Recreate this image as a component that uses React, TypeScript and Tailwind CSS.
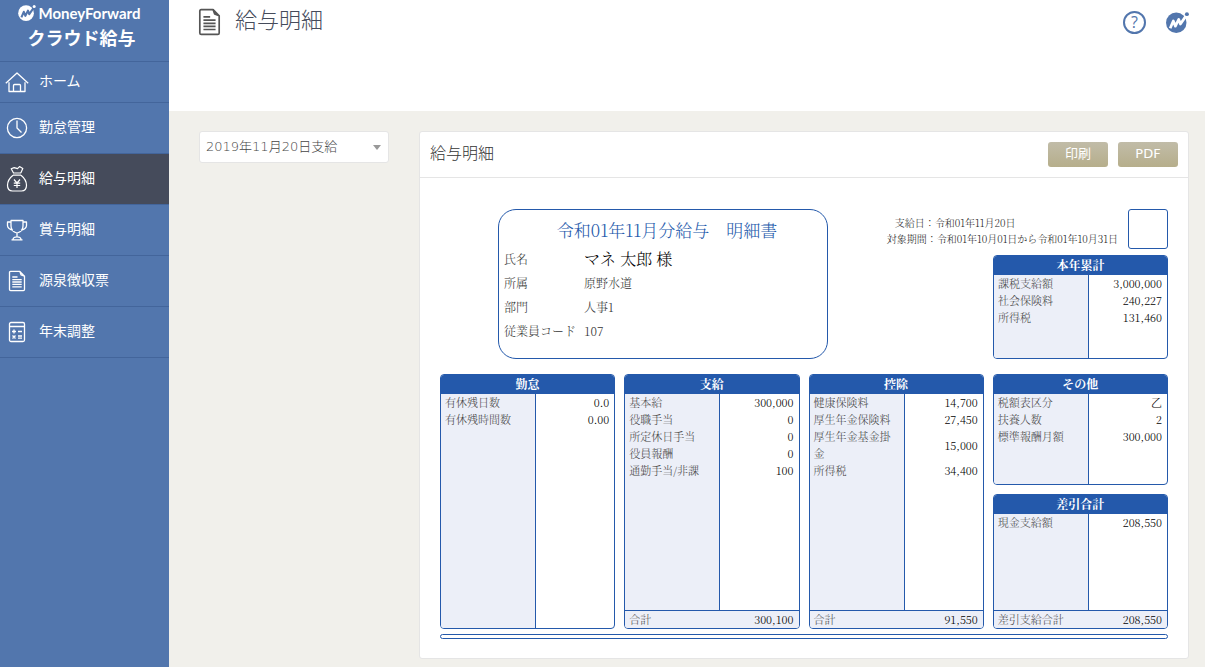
import type { ReactNode } from "react";
import clsx from "clsx";

type Row = { label: string; value: string };

const attendance: Row[] = [
  { label: "有休残日数", value: "0.0" },
  { label: "有休残時間数", value: "0.00" },
];

const payments: Row[] = [
  { label: "基本給", value: "300,000" },
  { label: "役職手当", value: "0" },
  { label: "所定休日手当", value: "0" },
  { label: "役員報酬", value: "0" },
  { label: "通勤手当/非課", value: "100" },
];

const deductions: Row[] = [
  { label: "健康保険料", value: "14,700" },
  { label: "厚生年金保険料", value: "27,450" },
  { label: "厚生年金基金掛金", value: "15,000" },
  { label: "所得税", value: "34,400" },
];

const others: Row[] = [
  { label: "税額表区分", value: "乙" },
  { label: "扶養人数", value: "2" },
  { label: "標準報酬月額", value: "300,000" },
];

const yearToDate: Row[] = [
  { label: "課税支給額", value: "3,000,000" },
  { label: "社会保険料", value: "240,227" },
  { label: "所得税", value: "131,460" },
];

function Icon({ children, className }: { children: ReactNode; className?: string }) {
  return (
    <svg
      viewBox="0 0 24 24"
      fill="none"
      stroke="currentColor"
      strokeWidth="1.3"
      strokeLinejoin="round"
      aria-hidden="true"
      className={clsx("shrink-0", className)}
    >
      {children}
    </svg>
  );
}

function HomeIcon() {
  return (
    <Icon className="size-6">
      <path d="M4 12.2V21.5H20V12.2M0.8 13.2L12 3L23.2 13.2M8.5 21.5V15.5Q8.5 14.5 9.5 14.5H14.5Q15.5 14.5 15.5 15.5V21.5" />
    </Icon>
  );
}

function ClockIcon() {
  return (
    <Icon className="size-6">
      <circle cx="12" cy="12" r="9.6" />
      <path d="M12 4.5V12L16.5 16.5" />
    </Icon>
  );
}

function MoneyBagIcon() {
  return (
    <svg
      viewBox="0 0 24 28"
      fill="none"
      stroke="currentColor"
      strokeWidth="1.2"
      strokeLinejoin="round"
      aria-hidden="true"
      className="h-7 w-6 shrink-0"
    >
      <path d="M8.5 8L6.2 3.8L9.2 2.6L12.5 3.6L14.5 1.6L17.8 3.6L15.8 8" />
      <path d="M8 8H16M8 10.2H16M8 10.2C4.5 13 2.5 16.5 2.5 20.3C2.5 24 4.5 26 7.5 26H16.5C19.5 26 21.5 24 21.5 20.3C21.5 16.5 19.5 13 16 10.2" />
      <path d="M9 14.5L12 18L15 14.5M12 18V23M8.8 18.2H15.2M8.8 20.5H15.2" />
    </svg>
  );
}

function TrophyIcon() {
  return (
    <Icon className="size-6">
      <path d="M6 2.5H18V8C18 11.5 15.5 14 12 15C8.5 14 6 11.5 6 8ZM6 4H2.5V7.5C2.5 10 5 11.5 8 12.3M18 4H21.5V7.5C21.5 10 19 11.5 16 12.3M12 15V18.5M8 21.8Q8 18.8 12 18.8Q16 18.8 16 21.8M6.5 21.8H17.5" />
    </Icon>
  );
}

function DocumentIcon({ className }: { className?: string }) {
  return (
    <Icon className={className}>
      <path d="M5.5 2.4H14.8L16 5.8L19.5 7.2V20.5Q19.5 21.6 18.4 21.6H5.6Q4.5 21.6 4.5 20.5V3.5Q4.5 2.4 5.5 2.4ZM14.8 2.4L19.5 7.2" />
      <path d="M7.3 8H12.5M7.3 10.6H16.7M7.3 13H16.7M7.3 15.4H16.7M7.3 17.8H16.7" />
    </Icon>
  );
}

function CalculatorIcon() {
  return (
    <Icon className="size-6">
      <rect x="4.5" y="2.5" width="15" height="19" rx="1.5" />
      <path d="M4.5 6.5H19.5M7 11.5H11M9 9.5V13.5M13 11.5H17M7.5 15.5L10.5 18.5M10.5 15.5L7.5 18.5M13 16H17M13 18.2H17" />
    </Icon>
  );
}

function BrandMark({ className, lineColor }: { className?: string; lineColor: string }) {
  return (
    <svg viewBox="0 0 22 20" fill="currentColor" aria-hidden="true" className={className}>
      <circle cx="9.8" cy="10.2" r="9.8" />
      <path
        d="M4 15.5L7 8.5L9 13.5L12.2 7L13.8 11.5L19.5 3.2"
        fill="none"
        stroke={lineColor}
        strokeWidth="2.6"
        strokeLinejoin="round"
      />
      <circle cx="20" cy="2" r="1.9" />
    </svg>
  );
}

const navItems = [
  { label: "ホーム", icon: <HomeIcon />, short: true },
  { label: "勤怠管理", icon: <ClockIcon /> },
  { label: "給与明細", icon: <MoneyBagIcon />, active: true },
  { label: "賞与明細", icon: <TrophyIcon /> },
  { label: "源泉徴収票", icon: <DocumentIcon className="size-6" /> },
  { label: "年末調整", icon: <CalculatorIcon /> },
];

function Sidebar() {
  return (
    <aside className="w-[169px] shrink-0 bg-[#5276ad] text-white">
      <div className="flex h-[62px] flex-col items-center border-b border-[#43659b] pt-1 pr-2.5">
        <div className="flex items-center gap-0.5">
          <BrandMark className="h-4 w-[18px]" lineColor="#5276ad" />
          <span className="font-[Lato,sans-serif] text-[15px] leading-[18px] font-bold">MoneyForward</span>
        </div>
        <span className="pl-1 text-lg leading-[34px] font-bold">クラウド給与</span>
      </div>
      <nav>
        {navItems.map((item) => (
          <a
            key={item.label}
            href="#"
            className={clsx(
              "flex items-center gap-2.5 border-b border-[#43659b] pl-[5px] text-sm",
              item.short ? "h-[41px]" : "h-[51px]",
              item.active && "bg-[#454b5b]"
            )}
          >
            {item.icon}
            <span className="pb-0.5">{item.label}</span>
          </a>
        ))}
      </nav>
    </aside>
  );
}

type SlipTableProps = {
  title: string;
  rows: Row[];
  total?: Row;
  className?: string;
};

function SlipTable({ title, rows, total, className }: SlipTableProps) {
  return (
    <section
      className={clsx("flex flex-col overflow-hidden rounded border border-[#2459ab] bg-white", className)}
    >
      <h3 className="bg-[#2459ab] pb-0.5 text-center text-xs leading-[17px] font-bold text-white">{title}</h3>
      <div className="grid flex-1">
        <table
          aria-label={title}
          className="h-full w-full table-fixed border-separate border-spacing-0 text-[11px] leading-[17px] font-light"
        >
          <colgroup>
            <col className="w-[95px]" />
            <col />
          </colgroup>
          <tbody>
            {rows.map((row) => (
              <tr key={row.label} className="h-[17px]">
                <th
                  scope="row"
                  className="border-r border-[#2459ab] bg-[#eceff8] px-1 text-left font-light text-[#444]"
                >
                  {row.label}
                </th>
                <td className="px-[5px] text-right text-black">{row.value}</td>
              </tr>
            ))}
            <tr>
              <td className="border-r border-[#2459ab] bg-[#eceff8]" />
              <td />
            </tr>
          </tbody>
          {total && (
            <tfoot>
              <tr className="h-[18px] bg-[#eceff8]">
                <th scope="row" className="border-t border-[#2459ab] px-1 text-left font-light text-[#444]">
                  {total.label}
                </th>
                <td className="border-t border-[#2459ab] px-[5px] text-right text-black">{total.value}</td>
              </tr>
            </tfoot>
          )}
        </table>
      </div>
    </section>
  );
}

function EmployeeCard() {
  return (
    <div className="ml-[58px] min-h-[150px] w-[330px] rounded-[18px] border border-[#2459ab] px-[5px] pt-[3px]">
      <h3 className="pl-2 text-center text-[17px] leading-[34px] font-light text-[#2459ab]">
        令和01年11月分給与　明細書
      </h3>
      <dl className="grid grid-cols-[80px_1fr] text-xs leading-6 font-light text-[#333]">
        <dt>氏名</dt>
        <dd className="text-base leading-6 text-black">マネ 太郎 様</dd>
        <dt>所属</dt>
        <dd>原野水道</dd>
        <dt>部門</dt>
        <dd>人事1</dd>
        <dt>従業員コード</dt>
        <dd>107</dd>
      </dl>
    </div>
  );
}

function Payslip() {
  return (
    <div className="px-5 pt-[31px] pb-[19px] font-['Noto_Serif_CJK_JP','Noto_Sans_CJK_JP',serif]">
      <div className="flex justify-between">
        <EmployeeCard />
        <div className="flex flex-col items-end gap-1.5">
          <div className="flex gap-2.5">
            <div className="pt-1.5 text-[10px] leading-4 font-light text-[#222]">
              <p className="pl-2">支給日：令和01年11月20日</p>
              <p>対象期間：令和01年10月01日から令和01年10月31日</p>
            </div>
            <div className="size-10 rounded-[3px] border border-[#2459ab]" />
          </div>
          <SlipTable title="本年累計" rows={yearToDate} className="w-[175px] flex-1" />
        </div>
      </div>
      <div className="mt-[15px] grid min-h-[255px] grid-cols-4 gap-[9px]">
        <SlipTable title="勤怠" rows={attendance} />
        <SlipTable title="支給" rows={payments} total={{ label: "合計", value: "300,100" }} />
        <SlipTable title="控除" rows={deductions} total={{ label: "合計", value: "91,550" }} />
        <div className="flex flex-col gap-[9px]">
          <SlipTable title="その他" rows={others} className="min-h-[111px]" />
          <SlipTable
            title="差引合計"
            rows={[{ label: "現金支給額", value: "208,550" }]}
            total={{ label: "差引支給合計", value: "208,550" }}
            className="flex-1"
          />
        </div>
      </div>
      <div className="mt-[5px] h-[5px] rounded-sm border border-[#2459ab]" />
    </div>
  );
}

function ActionButton({ children }: { children: ReactNode }) {
  return (
    <button
      type="button"
      className="h-[25px] w-[60px] rounded-[3px] bg-linear-to-b from-[#c1bca8] to-[#b6ae8b] pb-0.5 text-[13px] text-white"
    >
      {children}
    </button>
  );
}

export default function App() {
  return (
    <div className="flex min-h-screen bg-[#f1f0eb] font-['DejaVu_Sans','Noto_Sans_CJK_JP',sans-serif]">
      <Sidebar />
      <div className="min-w-0 flex-1">
        <header className="flex h-[111px] justify-between bg-white pr-4 pl-[25px]">
          <div className="flex h-11 items-center gap-2.5 text-[#454b5b]">
            <DocumentIcon className="h-8 w-[31px] text-[#555]" />
            <h1 className="pb-1 text-[22px] font-light">給与明細</h1>
          </div>
          <div className="flex h-11 items-center gap-5 text-[#5276ad]">
            <button
              type="button"
              aria-label="ヘルプ"
              className="size-[23px] rounded-full border-2 border-[#5276ad] font-['Open_Sans',sans-serif] text-base leading-[18px] font-medium"
            >
              ?
            </button>
            <a href="#" aria-label="マネーフォワード">
              <BrandMark className="h-[21px] w-[23px]" lineColor="#fff" />
            </a>
          </div>
        </header>
        <main className="flex items-start gap-[30px] pt-5 pr-4 pb-[7px] pl-[30px]">
          <div className="relative w-[190px] shrink-0">
            <select
              aria-label="支給日"
              className="h-8 w-full appearance-none rounded-[3px] border border-[#e5e5e5] bg-white pr-6 pl-1.5 text-[13px] font-light text-[#454545]"
            >
              <option>2019年11月20日支給</option>
            </select>
            <svg
              viewBox="0 0 8 5"
              aria-hidden="true"
              className="pointer-events-none absolute top-3.5 right-2 h-[5px] w-2 fill-[#999]"
            >
              <path d="M0 0H8L4 5Z" />
            </svg>
          </div>
          <div className="min-w-0 flex-1 rounded-[3px] border border-[#e5e5e5] bg-white">
            <div className="flex h-[46px] items-center justify-between border-b border-[#e5e5e5] px-2.5">
              <h2 className="pb-0.5 text-base font-light text-[#333]">給与明細</h2>
              <div className="flex gap-2.5">
                <ActionButton>印刷</ActionButton>
                <ActionButton>PDF</ActionButton>
              </div>
            </div>
            <Payslip />
          </div>
        </main>
      </div>
    </div>
  );
}
